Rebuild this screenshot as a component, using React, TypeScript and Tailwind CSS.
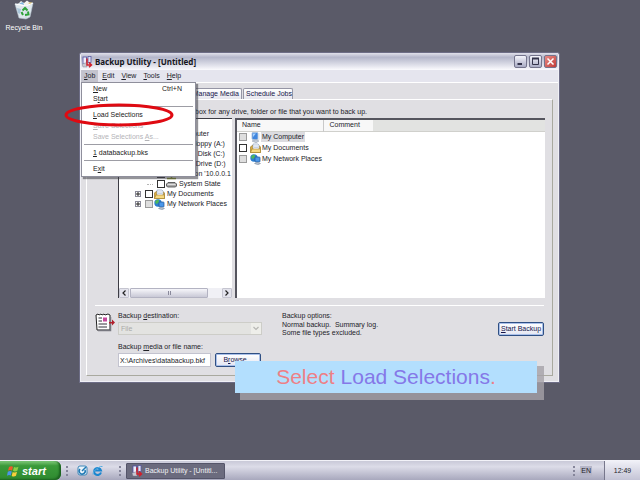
import React from "react";

type IconProps = { className?: string };

function RecycleBin() {
  return (
    <svg width="20" height="20" viewBox="0 0 20 20" aria-hidden="true">
      <path d="M1 4 L19 3 L16 17 L12 19 L5 18 Z" fill="#dfe8ee" stroke="#b3c3ce" strokeWidth=".6" />
      <path d="M4 4 L7 1 L10 3 L13 0.5 L17 3.5 L10 6 Z" fill="#f3f3ee" />
      <path d="M5 3.5 L9 2 L10 5 Z" fill="#7eb4df" />
      <path d="M14 3 L18 2 L16.500 5 Z" fill="#e4c97a" />
      <path d="M1 4 L12 6 L19 3" fill="none" stroke="#fff" strokeWidth="1" />
      <path d="M3 8 L7 9 L6 14 L4 13 Z" fill="#a9c6da" />
      <path d="M12 6 L12 19" stroke="#b9c8d2" strokeWidth=".6" />
      <path d="M8.500 10.500 L11 8 L13.500 10.500 M14 11.500 L14.500 14.500 L11 15 M9 15 L7.500 12" fill="none" stroke="#2fa33a" strokeWidth="2" />
    </svg>
  );
}

function BackupIcon({ className }: IconProps) {
  return (
    <svg className={className} width="11" height="12" viewBox="0 0 11 12" aria-hidden="true">
      <rect x="1" y="1" width="3.500" height="7" fill="#eeeefa" stroke="#4d4da0" strokeWidth=".8" />
      <rect x="6" y="0.500" width="3" height="6" fill="#dfe3f5" stroke="#5a5aa0" strokeWidth=".8" />
      <path d="M0 8 L5 6.500 L5 11 L1 11 Z" fill="#c7c7d2" stroke="#77778c" strokeWidth=".4" />
      <path d="M5 2.500 V9 H9.500 M7 6.500 L9.500 9 L7 11.300" fill="none" stroke="#d0202c" strokeWidth="1.500" />
    </svg>
  );
}

function ComputerIcon() {
  return (
    <svg width="11" height="11" viewBox="0 0 11 11" aria-hidden="true">
      <rect x="2" y="0.500" width="6" height="7" rx="1" fill="#3f86de" stroke="#a9c2de" strokeWidth=".9" />
      <path d="M3 1.500 H6 L3 5 Z" fill="#a4d1ff" />
      <path d="M2 9 L6 7.500 L9 9 L6 10.800 Z" fill="#c2cbd8" stroke="#74839a" strokeWidth=".4" />
      <rect x="8" y="1" width="1.500" height="7" fill="#dbe2ea" />
    </svg>
  );
}

function DocumentsIcon() {
  return (
    <svg width="11" height="11" viewBox="0 0 11 11" aria-hidden="true">
      <path d="M0.500 4 L2 2.500 H9 L10.500 4 V9.500 H0.500 Z" fill="#d9a93c" stroke="#94701d" strokeWidth=".6" />
      <path d="M3 1 H8 L9 2 V7 H3 Z" fill="#fbfcff" stroke="#7d93b5" strokeWidth=".6" />
      <path d="M4 3 H8 M4 4.500 H8" stroke="#91a9cb" strokeWidth=".5" />
      <path d="M0.500 9.500 L2 6 H10.500 V9.500 Z" fill="#f6d982" stroke="#94701d" strokeWidth=".5" />
    </svg>
  );
}

function NetworkIcon() {
  return (
    <svg width="11" height="11" viewBox="0 0 11 11" aria-hidden="true">
      <circle cx="4" cy="4" r="3.700" fill="#2b7fd0" />
      <path d="M1 2.500 Q3 0 5 1 L4.500 4 L2 5 Z" fill="#4fb85a" />
      <rect x="5" y="3" width="5" height="5" rx=".7" fill="#4a97ea" stroke="#23548f" strokeWidth=".7" />
      <path d="M4.500 9.500 L7 8.500 L10.500 9.500 L8 10.800 Z" fill="#b9c5d4" stroke="#5c6c82" strokeWidth=".4" />
    </svg>
  );
}

function DriveIcon() {
  return (
    <svg width="11" height="11" viewBox="0 0 11 11" aria-hidden="true">
      <path d="M0.500 5 L2 3.500 H9 L10.500 5 V7 L9.500 8 H1.500 L0.500 7 Z" fill="#a9a9a9" stroke="#444" strokeWidth=".8" />
      <path d="M1.500 5.500 H9.500" stroke="#eee" strokeWidth=".8" />
    </svg>
  );
}

function NetDriveIcon() {
  return (
    <svg width="11" height="11" viewBox="0 0 11 11" aria-hidden="true">
      <path d="M0.500 3 H10.500 V7 H0.500 Z" fill="#b5b55a" stroke="#444" strokeWidth=".8" />
      <path d="M5.500 7 V9 M1 9.500 H10" stroke="#8f9a2e" strokeWidth="1.500" />
    </svg>
  );
}

function Tick({ label, dim }: { label: string; dim?: boolean }) {
  return (
    <input
      type="checkbox"
      aria-label={label}
      disabled={dim}
      className={
        dim
          ? "size-2 shrink-0 appearance-none border border-[#9a9a9a] bg-[#dedede]"
          : "size-2 shrink-0 appearance-none border border-[#333333] bg-white"
      }
    />
  );
}

type Node = {
  label: string;
  icon: React.ReactNode;
  level: number;
  expand?: string;
  dim?: boolean;
};

const tree: Node[] = [
  { label: "Desktop", icon: <ComputerIcon />, level: 0 },
  { label: "My Computer", icon: <ComputerIcon />, level: 1, expand: "−", dim: true },
  { label: "3½ Floppy (A:)", icon: <DriveIcon />, level: 2, expand: "+" },
  { label: "Local Disk (C:)", icon: <DriveIcon />, level: 2, expand: "+" },
  { label: "DVD Drive (D:)", icon: <DriveIcon />, level: 2, expand: "+", dim: true },
  { label: "data on '10.0.0.1", icon: <NetDriveIcon />, level: 2, expand: "+" },
  { label: "System State", icon: <DriveIcon />, level: 2 },
  { label: "My Documents", icon: <DocumentsIcon />, level: 1, expand: "+" },
  { label: "My Network Places", icon: <NetworkIcon />, level: 1, expand: "+", dim: true },
];

const indent = ["pl-1", "pl-4", "pl-7"];

function TreeRow({ node }: { node: Node }) {
  return (
    <li className={`flex h-[10px] items-center whitespace-nowrap ${indent[node.level]}`}>
      {node.expand ? (
        <button
          aria-label={`Toggle ${node.label}`}
          className="flex size-[6px] shrink-0 items-center justify-center border border-[#8a8a98] bg-white"
        >
          <svg width="4" height="4" viewBox="0 0 4 4" aria-hidden="true">
            <path d={node.expand === "+" ? "M0 2 H4 M2 0 V4" : "M0 2 H4"} stroke="#222" strokeWidth="1" />
          </svg>
        </button>
      ) : (
        <span className="w-[6px] shrink-0 border-t border-dotted border-[#b5b5b5]" />
      )}
      <span className="ml-1 flex shrink-0 items-center gap-px">
        <Tick label={node.label} dim={node.dim} />
        {node.icon}
      </span>
      <span className="ml-[2px]">{node.label}</span>
    </li>
  );
}

function MenuItem({ children, hint, off }: { children: React.ReactNode; hint?: string; off?: boolean }) {
  return (
    <li>
      <button
        disabled={off}
        className={`flex w-full items-center justify-between pr-[13px] pl-[11px] ${off ? "h-[11px] text-[#b4b4b8]" : "h-[10px] text-[#222]"}`}
      >
        <span>{children}</span>
        {hint && <span>{hint}</span>}
      </button>
    </li>
  );
}

function MenuLine() {
  return <li className="mx-[2px] mt-[2px] mb-[3px] border-t border-[#9d9da5]" />;
}

function JobMenu() {
  return (
    <ul className="absolute top-full left-0 z-10 w-[115px] border border-[#8f8f9c] bg-white pt-px pb-[2px] shadow-[2px_2px_1px_rgba(60,60,70,0.55)]">
      <MenuItem hint="Ctrl+N"><u>N</u>ew</MenuItem>
      <MenuItem>S<u>t</u>art</MenuItem>
      <MenuLine />
      <MenuItem><u>L</u>oad Selections</MenuItem>
      <MenuItem off><u>S</u>ave Selections</MenuItem>
      <MenuItem off>Save Selections <u>A</u>s...</MenuItem>
      <MenuLine />
      <MenuItem><u>1</u> databackup.bks</MenuItem>
      <MenuLine />
      <MenuItem>E<u>x</u>it</MenuItem>
    </ul>
  );
}

function TitleBar() {
  const box = "flex size-[13px] items-center justify-center rounded-[2px] border border-[#74748c]";
  return (
    <header className="flex h-[17px] shrink-0 items-center bg-linear-to-b from-[#e0e0ea] via-[#b4b6ca] via-25% to-[#fbfbfe] pr-px pl-px">
      <BackupIcon />
      <h1 className="ml-[2px] flex-1 font-['Noto_Sans','Liberation_Sans',sans-serif] text-[8px] leading-[12px] font-bold text-[#15151c]">
        Backup Utility - [Untitled]
      </h1>
      <div className="flex gap-[2px]">
        <button aria-label="Minimize" className={`${box} bg-linear-to-b from-[#f5f5fb] to-[#a9abc4]`}>
          <svg width="9" height="9" viewBox="0 0 9 9" aria-hidden="true"><path d="M1.500 7 H6" stroke="#33334a" strokeWidth="2" /></svg>
        </button>
        <button aria-label="Maximize" className={`${box} bg-linear-to-b from-[#f5f5fb] to-[#a9abc4]`}>
          <svg width="9" height="9" viewBox="0 0 9 9" aria-hidden="true"><path d="M1 1.500 H8" stroke="#33334a" strokeWidth="2" /><path d="M1.500 2 V7.500 H7.500 V2" fill="none" stroke="#33334a" /></svg>
        </button>
        <button aria-label="Close" className={`${box} bg-linear-to-br from-[#e58a86] to-[#c23a38]`}>
          <svg width="9" height="9" viewBox="0 0 9 9" aria-hidden="true"><path d="M1.500 1.500 L7.500 7.500 M7.500 1.500 L1.500 7.500" stroke="#fff" strokeWidth="1.500" /></svg>
        </button>
      </div>
    </header>
  );
}

function MenuBar() {
  return (
    <nav className="relative flex h-[13px] shrink-0 items-stretch gap-px border-b border-white bg-[#e5e5ee]">
      <button className="bg-[#c3c3cd] px-[3px]"><u>J</u>ob</button>
      <button className="px-[3px]"><u>E</u>dit</button>
      <button className="px-[3px]"><u>V</u>iew</button>
      <button className="px-[3px]"><u>T</u>ools</button>
      <button className="px-[3px]"><u>H</u>elp</button>
      <JobMenu />
    </nav>
  );
}

function Tabs() {
  const tab = "h-[11px] whitespace-nowrap rounded-t-[2px] border border-b-0 border-[#9595a5] bg-linear-to-b from-white to-[#e6e6ee] px-[2px] text-[#15154a]";
  return (
    <div role="tablist" className="flex">
      <button role="tab" className={`${tab} w-[33px]`}>Welcome</button>
      <button role="tab" aria-selected="true" className={`${tab} w-[30px]`}>Backup</button>
      <button role="tab" className={`${tab} mr-px w-[93px] text-right`}>Restore and Manage Media</button>
      <button role="tab" className={`${tab} w-[50px]`}>Schedule Jobs</button>
    </div>
  );
}

function TreePane() {
  return (
    <div className="flex w-[114px] shrink-0 flex-col overflow-hidden border-t border-l border-[#3c3c44] bg-white">
      <ul className="flex-1 overflow-hidden">
        {tree.map((n) => (
          <TreeRow key={n.label} node={n} />
        ))}
      </ul>
      <div className="flex h-[10px] items-stretch bg-[#f0f0f5]">
        <button aria-label="Scroll left" className="flex w-[10px] items-center justify-center rounded-[1px] border border-[#c5c5d0] bg-[#e3e3ec]">
          <svg width="4" height="6" viewBox="0 0 4 6" aria-hidden="true"><path d="M3.500 0.500 L1 3 L3.500 5.500" fill="none" stroke="#222" strokeWidth="1.200" /></svg>
        </button>
        <div className="ml-px flex w-[78px] items-center justify-center gap-px rounded-[1px] border border-[#b3b3c2] bg-linear-to-b from-[#f6f6fa] to-[#c9c9d6]">
          <span className="h-1 w-px bg-[#8a8a9c]" />
          <span className="h-1 w-px bg-[#8a8a9c]" />
        </div>
        <button aria-label="Scroll right" className="ml-auto flex w-[10px] items-center justify-center rounded-[1px] border border-[#c5c5d0] bg-[#e3e3ec]">
          <svg width="4" height="6" viewBox="0 0 4 6" aria-hidden="true"><path d="M0.500 0.500 L3 3 L0.500 5.500" fill="none" stroke="#222" strokeWidth="1.200" /></svg>
        </button>
      </div>
    </div>
  );
}

function ListPane() {
  const rows = [
    { label: "My Computer", icon: <ComputerIcon />, dim: true },
    { label: "My Documents", icon: <DocumentsIcon />, dim: false },
    { label: "My Network Places", icon: <NetworkIcon />, dim: true },
  ];
  return (
    <div className="ml-[3px] flex-1 border-t-2 border-l-2 border-[#55555e] bg-white">
      <table className="w-full table-fixed border-collapse text-left">
        <thead>
          <tr className="h-[11px] border-b border-[#d0d0cc] bg-[#e2e3e1]">
            <th className="w-[86px] border-r border-[#c9c9c9] bg-[#f8f8f8] p-0 pl-[5px] font-normal">Name</th>
            <th className="w-[50px] bg-[#f8f8f8] p-0 pl-[6px] font-normal">Comment</th>
            <th className="p-0" aria-label="Empty" />
          </tr>
        </thead>
        <tbody>
          {rows.map((r, i) => (
            <tr key={r.label}>
              <td colSpan={3} className="p-0">
                <div className="flex h-[11px] items-center pl-[2px]">
                  <Tick label={r.label} dim={r.dim} />
                  <span className="ml-[3px] flex">{r.icon}</span>
                  <span className={i === 0 ? "bg-[#dcdce0] px-px" : "px-px"}>{r.label}</span>
                </div>
              </td>
            </tr>
          ))}
        </tbody>
      </table>
    </div>
  );
}

function Job() {
  const action = "h-[14px] rounded-[2px] border border-[#2f4f83] bg-linear-to-b from-white to-[#e4e6f2] text-center whitespace-nowrap text-[#15154a] shadow-[inset_0_0_0_1px_#a9c0ea]";
  return (
    <section className="flex h-[69px] pt-[5px] pl-2">
      <svg className="mt-[2px] shrink-0" width="20" height="19" viewBox="0 0 20 19" aria-hidden="true">
        <path d="M1 2 L3 1 L4 2 L6 1 L7 2 L9 1 L10 2 L13 1 L15 2 V17 H2 Z" fill="#fff" stroke="#222" strokeWidth="1" />
        <path d="M3 17.500 H15.500 V4" fill="none" stroke="#77777f" strokeWidth="1.500" />
        <path d="M3.500 5 H7 M3.500 8 H7 M3.500 11 H12 M3.500 14 H12" stroke="#33333a" strokeWidth="1" />
        <rect x="8" y="4.500" width="4" height="4" fill="#c5479c" />
        <path d="M14 9 H17 V6.500 L20 9.500 L17 12.500 V10.500 H14 Z" fill="#b01f2c" />
      </svg>
      <div className="ml-[3px] w-[144px] shrink-0">
        <label htmlFor="dest" className="block">Backup <u>d</u>estination:</label>
        <select id="dest" disabled className="mt-px block h-[13px] w-full appearance-none border border-[#cdcdc8] bg-[#e3e3e1] bg-[linear-gradient(90deg,transparent_132px,#eeeeea_132px)] pl-[2px] text-[#aaaaa8] opacity-100">
          <option>File</option>
        </select>
        <svg className="-mt-[9px] mr-[3px] ml-auto block" width="6" height="5" viewBox="0 0 6 5" aria-hidden="true"><path d="M0.500 1 L3 3.500 L5.500 1" fill="none" stroke="#b5b5b2" strokeWidth="1.200" /></svg>
        <label htmlFor="media" className="mt-[11px] block">Backup <u>m</u>edia or file name:</label>
        <div className="mt-px flex gap-1">
          <input id="media" type="text" defaultValue="X:\Archives\databackup.bkf" className="h-[14px] w-[93px] border border-[#c3c3cf] bg-white px-px" />
          <button className={`${action} w-[46px]`}>B<u>r</u>owse...</button>
        </div>
      </div>
      <div className="ml-5 flex-1">
        <p>Backup options:</p>
        <p className="leading-[8px] whitespace-pre">Normal backup.  Summary log.</p>
        <p className="leading-[8px]">Some file types excluded.</p>
      </div>
      <button className={`${action} mt-[11px] mr-2 w-[46px] shrink-0`}><u>S</u>tart Backup</button>
    </section>
  );
}

function BackupWindow() {
  return (
    <section className="absolute top-[52px] right-20 left-[79px] rounded-t-[3px] border border-[#6d6d86] bg-[#f0f0f6] px-px pb-px">
      <TitleBar />
      <MenuBar />
      <div className="bg-[#e0dfe3] px-[5px] pt-[5px] pb-[5px]">
        <Tabs />
        <div className="border border-[#a9a99f] border-t-white border-l-white">
          <p className="mt-[7px] ml-[31px]">Click to select the check box for any drive, folder or file that you want to back up.</p>
          <div className="mt-px mr-[7px] ml-[31px] flex h-[180px]">
            <TreePane />
            <ListPane />
          </div>
          <hr className="mx-2 mt-[7px] border-white" />
          <Job />
        </div>
      </div>
    </section>
  );
}

function Grip() {
  return <span className="mx-1 h-3 w-[4px] bg-[radial-gradient(#85859a_1px,transparent_1px)] bg-[size:4px_4px]" />;
}

function Taskbar() {
  return (
    <footer className="flex h-5 shrink-0 items-center border-t border-[#f2f2f8] bg-linear-to-b from-[#c9c9d8] via-[#dcdce8] via-30% to-[#a8a8bd]">
      <button className="flex h-full w-[61px] items-center gap-[3px] rounded-r-md bg-linear-to-b from-[#7fc97a] via-[#3a9a3a] via-25% to-[#2f8a30] pl-[7px] text-[11px] leading-[12px] font-bold text-white italic shadow-[inset_-2px_-1px_2px_#1c6320]">
        <svg width="12" height="12" viewBox="0 0 12 12" aria-hidden="true">
          <path d="M2 2 Q4 0.500 6 1.700 L5 5.500 Q3 4.500 1 5.700 Z" fill="#ee5a2c" />
          <path d="M7 2 Q9 3 11.500 1.700 L10.300 5.700 Q8 7 6 5.800 Z" fill="#8ccf45" />
          <path d="M0.800 6.700 Q3 5.500 4.800 6.500 L3.700 10.500 Q2 9.500 0 10.700 Z" fill="#4c93ea" />
          <path d="M5.700 6.900 Q8 8 10 6.700 L9 10.700 Q7 12 4.700 10.900 Z" fill="#f8cf3b" />
        </svg>
        start
      </button>
      <Grip />
      <div className="ml-1 flex gap-1">
        <button aria-label="Outlook Express">
          <svg width="11" height="11" viewBox="0 0 11 11" aria-hidden="true">
            <rect x="1" y="1" width="9" height="9" rx="2" fill="#eaf4fb" stroke="#3b86b8" />
            <path d="M3 4 A3 3 0 1 0 8 5 M5 6 L9 2" fill="none" stroke="#1f78b4" strokeWidth="1.500" />
          </svg>
        </button>
        <button aria-label="Internet Explorer">
          <svg width="11" height="11" viewBox="0 0 11 11" aria-hidden="true">
            <path d="M9 7.500 A3.500 3.500 0 1 1 9 5.500 H3" fill="none" stroke="#1a86cf" strokeWidth="2" />
            <path d="M1 9.500 Q0 7 5 3.500 Q9 0.500 10.500 1.500" fill="none" stroke="#58aee2" strokeWidth="1" />
          </svg>
        </button>
      </div>
      <span className="w-[11px]" />
      <Grip />
      <button className="flex h-4 w-[99px] items-center gap-[2px] rounded-[1px] border border-[#55556a] bg-[#6b6b7e] pl-[5px] whitespace-nowrap text-[#f2f2f6]">
        <BackupIcon />
        Backup Utility - [Untitl...
      </button>
      <span className="flex-1" />
      <Grip />
      <span className="mr-3 bg-[#b6b6c8] px-px">EN</span>
      <div className="flex h-full w-9 items-center justify-center border-l border-[#77778c] bg-linear-to-b from-[#f0f0f7] to-[#c4c4d6]">
        <time>12:49</time>
      </div>
    </footer>
  );
}

export default function App() {
  return (
    <div className="flex h-screen flex-col overflow-hidden bg-[#5a5a68] font-['Liberation_Sans',Arial,sans-serif] text-[7px] leading-[10px] text-[#222228]">
      <main className="relative flex-1">
        <button className="flex w-12 flex-col items-center text-white">
          <RecycleBin />
          <span className="mt-[3px]">Recycle Bin</span>
        </button>
        <BackupWindow />
        <svg className="absolute top-[102px] left-[64px] z-20" width="112" height="26" viewBox="0 0 112 26" aria-hidden="true">
          <ellipse cx="55" cy="13" rx="53" ry="10" fill="none" stroke="#df0a12" strokeWidth="3" />
        </svg>
        <p className="absolute top-[361px] left-[235px] z-20 flex h-8 w-[302px] items-center justify-center gap-[6px] bg-[#b3dffe] text-[21px] leading-6 text-[#8578e8] shadow-[6px_6px_0_1px_rgba(165,161,168,0.8)]">
          <span className="text-[#ee7f86]">Select</span>
          <span>Load Selections<span className="text-[#ee7f86]">.</span></span>
        </p>
      </main>
      <Taskbar />
    </div>
  );
}
